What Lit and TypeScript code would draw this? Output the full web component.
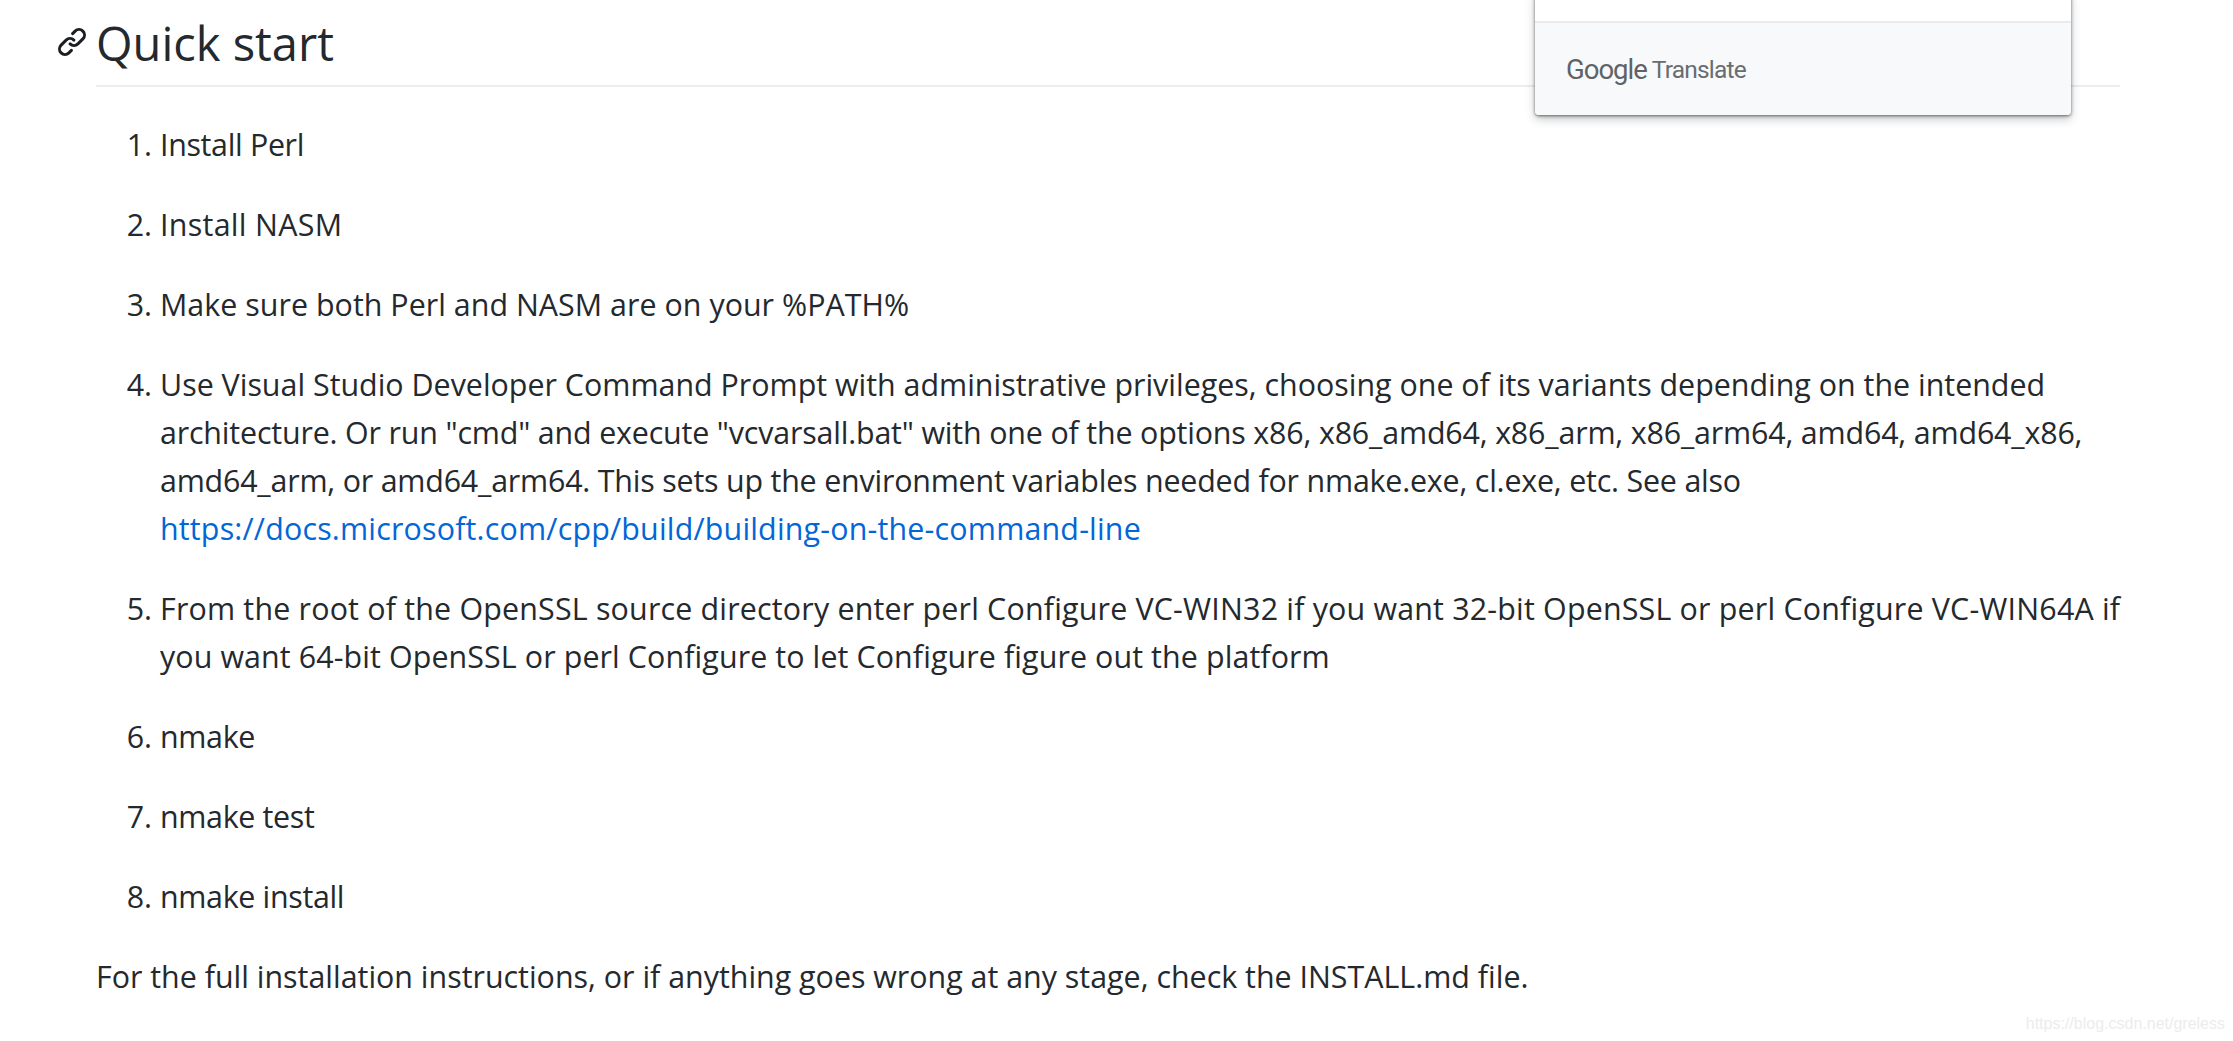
import { LitElement, html, css } from "lit";
import { customElement } from "lit/decorators.js";

@customElement("app-root")
export class AppRoot extends LitElement {
  static styles = css`
    :host { display: block; height: 1041px; background: #fff; overflow: hidden; color: #24292e; font-family: "Open Sans", sans-serif; position: relative; }
    .page { padding: 0 113px 0 96px; font-size: 30.4px; line-height: 48px; }
    h2 { margin: 0; height: 85px; border-bottom: 2px solid #eaecef; font-size: 47px; font-weight: 400; line-height: 86px; position: relative; }
    .anchor { position: absolute; left: -40px; top: 26px; width: 32px; height: 32px; fill: #1b1f23; }
    ol { margin: 34px 0 32px; padding: 0 0 0 64px; }
    li { margin-bottom: 32px; }
    a { color: #0366d6; text-decoration: none; }
    p { margin: 0; }
    .l { white-space: nowrap; }
    .m3 { letter-spacing: -0.33px; }
    .m2 { letter-spacing: -0.2px; }
    .m1 { letter-spacing: -0.17px; }
    .p0 { letter-spacing: 0.03px; }
    .p1 { letter-spacing: 0.1px; }
    .p2 { letter-spacing: 0.19px; }
    .p3 { letter-spacing: 0.3px; }
    .popup { position: absolute; left: 1535px; top: -10px; width: 536px; height: 125px; background: #fff; border-radius: 4px; box-shadow: 0 1px 3px rgba(60,64,67,.75), 0 4px 10px rgba(60,64,67,.3); display: flex; flex-direction: column; justify-content: flex-end; overflow: hidden; }
    .foot { box-sizing: border-box; height: 94px; background: #f8f9fa; border-top: 2px solid #ebebeb; display: flex; align-items: center; padding: 0 0 0 31px; gap: 5px; color: #5f6368; font-family: Roboto, sans-serif; letter-spacing: -0.8px; }
    .g { font-size: 27.5px; font-weight: 400; letter-spacing: -1px; }
    .t { font-size: 24.5px; font-weight: 400; color: #696d71; }
    .mark { position: absolute; right: 8px; top: 1012px; font: 16px/24px "Liberation Sans", sans-serif; color: #ececec; }
  `;
  render() {
    return html`<div class="page">
      <h2>
        <svg class="anchor" viewBox="0 0 16 16"><path fill-rule="evenodd" d="M7.775 3.275a.75.75 0 001.06 1.06l1.25-1.25a2 2 0 112.83 2.83l-2.5 2.5a2 2 0 01-2.83 0 .75.75 0 00-1.06 1.06 3.5 3.5 0 004.95 0l2.5-2.5a3.5 3.5 0 00-4.95-4.95l-1.25 1.25zm-4.69 9.64a2 2 0 010-2.83l2.5-2.5a2 2 0 012.83 0 .75.75 0 001.06-1.06 3.5 3.5 0 00-4.95 0l-2.5 2.5a3.5 3.5 0 004.95 4.95l1.25-1.25a.75.75 0 00-1.06-1.06l-1.25 1.25a2 2 0 01-2.83 0z"></path></svg>
        Quick start
      </h2>
      <ol>
        <li><span class="l m3">Install Perl</span></li>
        <li><span class="l p3">Install NASM</span></li>
        <li><span class="l p0">Make sure both Perl and NASM are on your %PATH%</span></li>
        <li><span class="l">Use Visual Studio Developer Command Prompt with administrative privileges, choosing one of its variants depending on the intended</span><br>
          <span class="l m1">architecture. Or run "cmd" and execute "vcvarsall.bat" with one of the options x86, x86_amd64, x86_arm, x86_arm64, amd64, amd64_x86,</span><br>
          <span class="l m2">amd64_arm, or amd64_arm64. This sets up the environment variables needed for nmake.exe, cl.exe, etc. See also</span><br>
          <a class="l p2" href="#">https://docs.microsoft.com/cpp/build/building-on-the-command-line</a></li>
        <li><span class="l p2">From the root of the OpenSSL source directory enter perl Configure VC-WIN32 if you want 32-bit OpenSSL or perl Configure VC-WIN64A if</span><br>
          <span class="l p1">you want 64-bit OpenSSL or perl Configure to let Configure figure out the platform</span></li>
        <li><span class="l m3">nmake</span></li>
        <li><span class="l m3">nmake test</span></li>
        <li><span class="l m3">nmake install</span></li>
      </ol>
      <p>For the full installation instructions, or if anything goes wrong at any stage, check the INSTALL.md file.</p>
    </div>
    <div class="popup"><div class="foot"><span class="g">Google</span><span class="t">Translate</span></div></div>
    <div class="mark">https://blog.csdn.net/greless</div>`;
  }
}
